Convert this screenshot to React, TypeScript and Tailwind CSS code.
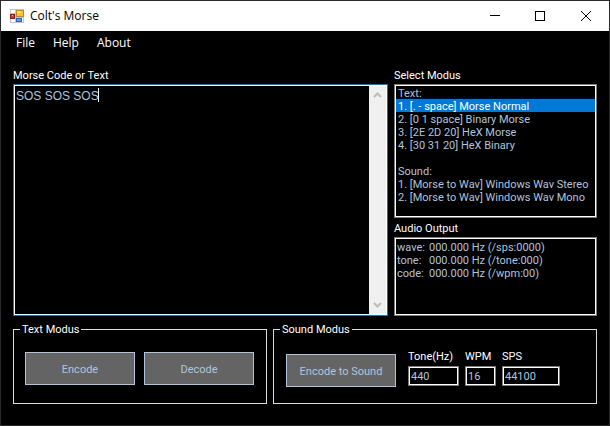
import { useState } from "react";
import type { ReactNode } from "react";

const MODES: { label: string; heading?: boolean }[] = [
  { label: "Text:", heading: true },
  { label: "1. [. - space] Morse Normal" },
  { label: "2. [0 1 space] Binary Morse" },
  { label: "3. [2E 2D 20] HeX Morse" },
  { label: "4. [30 31 20] HeX Binary" },
  { label: "\u00a0", heading: true },
  { label: "Sound:", heading: true },
  { label: "1. [Morse to Wav] Windows Wav Stereo" },
  { label: "2. [Morse to Wav] Windows Wav Mono" },
];

const READINGS = [
  { name: "wave:", value: "000.000 Hz (/sps:0000)" },
  { name: "tone:", value: "000.000 Hz (/tone:000)" },
  { name: "code:", value: "000.000 Hz (/wpm:00)" },
];

function TitleBar() {
  return (
    <header className="flex h-[30px] items-center bg-white pl-[9px] text-black">
      <svg width="14" height="14" viewBox="0 0 14 14" shapeRendering="crispEdges" aria-hidden="true">
        <rect width="14" height="14" fill="#c4c4c4" />
        <rect x="1" y="1" width="4" height="3" fill="#fff" />
        <rect x="1" y="10" width="4" height="3" fill="#fff" />
        <rect x="12" y="9" width="1" height="4" fill="#fff" />
        <rect x="0" y="5" width="5" height="5" fill="#8e1b14" />
        <rect x="1" y="6" width="3" height="3" fill="#d33c2c" />
        <rect x="2" y="6" width="1" height="1" fill="#f6a79c" />
        <rect x="6" y="1" width="8" height="7" fill="#c8860b" />
        <rect x="7" y="2" width="6" height="5" fill="#fcc52c" />
        <rect x="7" y="2" width="4" height="2" fill="#ffe38a" />
        <rect x="6" y="9" width="6" height="4" fill="#2a63bf" />
        <rect x="7" y="10" width="4" height="2" fill="#5b9bf0" />
      </svg>
      <h1 className="ml-[6px] flex-1 font-['Open_Sans','Noto_Sans',sans-serif] text-[12px] leading-4">Colt's Morse</h1>
      <button type="button" aria-label="Minimize" className="flex h-full w-[45px] items-center justify-center">
        <svg width="10" height="10" viewBox="0 0 10 10" stroke="#000" shapeRendering="crispEdges">
          <path d="M0 4.5H10" />
        </svg>
      </button>
      <button type="button" aria-label="Maximize" className="flex h-full w-[45px] items-center justify-center">
        <svg width="10" height="10" viewBox="0 0 10 10" fill="none" stroke="#000" shapeRendering="crispEdges">
          <rect x="0.5" y="0.5" width="9" height="9" />
        </svg>
      </button>
      <button type="button" aria-label="Close" className="flex h-full w-[47px] items-center justify-center">
        <svg width="10" height="10" viewBox="0 0 10 10" stroke="#000">
          <path d="M0 0L10 10M10 0L0 10" />
        </svg>
      </button>
    </header>
  );
}

function MenuBar() {
  return (
    <nav className="flex h-6 items-center gap-[18px] pl-[15px] font-['Open_Sans','Noto_Sans',sans-serif] text-[12px] leading-4 text-white">
      <button type="button">File</button>
      <button type="button">Help</button>
      <button type="button">About</button>
    </nav>
  );
}

function ScrollBar() {
  return (
    <div className="flex w-[17px] flex-col items-center justify-between bg-[#f0f0f0] py-[6px]" aria-hidden="true">
      <svg width="9" height="6" viewBox="0 0 9 6" fill="none" stroke="#bcbcbc" strokeWidth="2">
        <path d="M1 5L4.500 1.500L8 5" />
      </svg>
      <svg width="9" height="6" viewBox="0 0 9 6" fill="none" stroke="#bcbcbc" strokeWidth="2">
        <path d="M1 1L4.500 4.500L8 1" />
      </svg>
    </div>
  );
}

function Group({ title, children }: { title: string; children: ReactNode }) {
  return (
    <fieldset className="h-[81px] min-w-0 border border-[#dcdcdc] px-[11px]">
      <legend className="-ml-[5px] px-[2px] leading-[13px] text-white">{title}</legend>
      {children}
    </fieldset>
  );
}

function ActionButton({ children }: { children: string }) {
  return (
    <button type="button" className="h-[33px] w-[110px] border border-[#b0c4de] bg-[#646464] pt-[3px] text-[#b0c4de]">
      {children}
    </button>
  );
}

function NumberField({ id, label, value, width }: { id: string; label: string; value: string; width: string }) {
  return (
    <div className="flex flex-col gap-[3px]">
      <label htmlFor={id} className="leading-[13px] text-white">
        {label}
      </label>
      <input
        id={id}
        defaultValue={value}
        className={`${width} h-5 border border-[#7a7a7a] bg-black px-[2px] text-[#b0c4de] shadow-[inset_0_0_0_1px_#fff] outline-none`}
      />
    </div>
  );
}

export default function App() {
  const [mode, setMode] = useState("1");

  return (
    <div className="min-h-screen border border-[#2b2b2b] bg-black font-[Roboto,'Liberation_Sans',sans-serif] text-[11px]">
      <TitleBar />
      <MenuBar />
      <main className="px-3 pt-[14px]">
        <div className="grid grid-cols-[375fr_203fr] gap-x-[6px]">
          <section className="flex flex-col">
            <label htmlFor="source" className="mb-[2px] leading-[13px] text-white">
              Morse Code or Text
            </label>
            <div className="relative flex flex-1 border border-[#0078d7]">
              <div className="flex flex-1 border border-white">
                <textarea
                  id="source"
                  defaultValue="SOS SOS SOS"
                  className="flex-1 resize-none bg-black px-px pt-[2px] font-['Liberation_Sans',Arial,sans-serif] text-[12px] leading-4 text-[#b0c4de] outline-none"
                />
                <ScrollBar />
              </div>
              <span className="absolute top-[3px] left-[84px] h-[14px] w-px bg-white" />
            </div>
          </section>
          <section className="flex flex-col">
            <label htmlFor="mode" className="mb-[2px] leading-[13px] text-white">
              Select Modus
            </label>
            <div className="border border-[#7a7a7a]">
              <select
                id="mode"
                size={10}
                value={mode}
                onChange={(e) => setMode(e.target.value)}
                className="block h-[132px] w-full appearance-none overflow-hidden border border-white bg-black text-[#b0c4de] outline-none"
              >
                {MODES.map((m, i) => (
                  <option
                    key={i}
                    value={String(i)}
                    disabled={m.heading}
                    className="block h-[13px] min-h-0 p-0 pt-px pl-[2px] leading-[13px] text-[#b0c4de] checked:bg-[linear-gradient(#0078d7,#0078d7)] checked:[-webkit-text-fill-color:#fff]"
                  >
                    {m.label}
                  </option>
                ))}
              </select>
            </div>
            <h2 className="mt-1 mb-[2px] leading-[13px] text-white">Audio Output</h2>
            <div className="border border-[#7a7a7a]">
              <dl className="h-[77px] border border-white pt-[2px] pl-px leading-[13px] text-[#b0c4de]">
                {READINGS.map((r) => (
                  <div key={r.name} className="flex">
                    <dt className="w-8">{r.name}</dt>
                    <dd>{r.value}</dd>
                  </div>
                ))}
              </dl>
            </div>
          </section>
        </div>
        <div className="mt-[7px] grid grid-cols-[254fr_324fr] gap-x-[6px]">
          <Group title="Text Modus">
            <div className="flex gap-[9px] pt-4">
              <ActionButton>Encode</ActionButton>
              <ActionButton>Decode</ActionButton>
            </div>
          </Group>
          <Group title="Sound Modus">
            <div className="flex pt-[14px] pl-px">
              <div className="mr-3 pt-1">
                <ActionButton>Encode to Sound</ActionButton>
              </div>
              <div className="flex gap-[6px]">
                <NumberField id="tone" label="Tone(Hz)" value="440" width="w-[51px]" />
                <NumberField id="wpm" label="WPM" value="16" width="w-[31px]" />
                <NumberField id="sps" label="SPS" value="44100" width="w-[58px]" />
              </div>
            </div>
          </Group>
        </div>
      </main>
    </div>
  );
}
